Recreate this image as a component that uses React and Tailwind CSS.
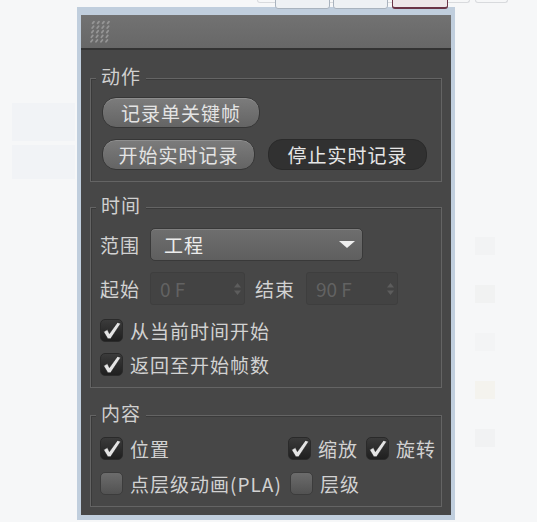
import React from "react";

const GroupBox = ({ title, className, children }) => (
  <div className={`relative mx-[9px] border border-[#646464] shadow-[inset_1px_1px_0_#3a3a3a] ${className}`}>
    <span className="absolute left-[5px] -top-[13px] bg-[#474747] px-[5px] text-[19px] leading-none tracking-[1px] text-[#d0d0d0]">
      {title}
    </span>
    {children}
  </div>
);

const Check = ({ on }) =>
  on ? (
    <span className="flex h-[23px] w-[23px] shrink-0 items-center justify-center rounded-[5px] border border-[#2a2a2a] bg-gradient-to-b from-[#3b3b3b] to-[#1f1f1f]">
      <svg width="21" height="21" viewBox="0 0 21 21">
        <path d="M2.6 11.8 L6.4 9.6 L8.4 13.6 L16.4 2.4 L19.8 3.4 L9.6 18.8 L6.8 18.8 Z" fill="#e4e4e4" stroke="#1a1a1a" strokeWidth="0.6" />
      </svg>
    </span>
  ) : (
    <span className="h-[23px] w-[23px] shrink-0 rounded-[5px] border border-[#3c3c3c] bg-gradient-to-b from-[#6c6c6c] to-[#525252]" />
  );

const CheckRow = ({ on, label, className = "" }) => (
  <div className={`flex items-center gap-[7px] ${className}`}>
    <Check on={on} />
    <span className="text-[19px] leading-none tracking-[1px] text-[#d2d2d2]">{label}</span>
  </div>
);

const PillButton = ({ label, pressed, width }) => (
  <div
    className={`flex h-[31px] items-center justify-center rounded-[14px] border text-[19px] leading-none tracking-[1px] ${width} ${
      pressed
        ? "border-[#2a2a2a] bg-[#313131] text-[#e6e6e6]"
        : "border-[#363636] bg-gradient-to-b from-[#7c7c7c] to-[#646464] text-[#e4e4e4] shadow-[inset_0_1px_0_#8e8e8e]"
    }`}
  >
    {label}
  </div>
);

const Spinner = () => (
  <svg width="9" height="14" viewBox="0 0 9 14">
    <path d="M4.5 1 L8 5.5 L1 5.5 Z" fill="#5d5d5d" />
    <path d="M4.5 13 L8 8.5 L1 8.5 Z" fill="#5d5d5d" />
  </svg>
);

const FrameField = ({ value, width }) => (
  <div className={`flex h-[33px] items-center justify-between rounded-[3px] border border-[#3e3e3e] bg-[#434343] pl-[9px] pr-[2px] ${width}`}>
    <span className="text-[19px] leading-none text-[#626262]">{value}</span>
    <Spinner />
  </div>
);

const Grip = () => (
  <svg width="22" height="24" viewBox="0 0 22 24">
    {[0, 1, 2, 3, 4].map((r) =>
      [0, 1, 2, 3].map((c) => (
        <path
          key={`${r}-${c}`}
          d={`M${c * 5 + 2.4 + (4 - r) * 0.4} ${r * 4.6 + 1.6} l-1.4 1.8`}
          stroke="#959595"
          strokeWidth="1.8"
          strokeLinecap="round"
        />
      ))
    )}
  </svg>
);

export default function App() {
  return (
    <div className="flex h-[522px] w-[537px] flex-col overflow-hidden bg-[#f6f7f8] font-['Noto_Sans_CJK_SC','Noto_Sans',sans-serif]">
      {/* page behind the window */}
      <div className="flex h-[7px] shrink-0 items-start">
        <div className="ml-[257px] h-[3px] w-[213px] rounded-b-md border-x border-b border-[#d8dadd]" />
        <div className="ml-[5px] h-[3px] w-[33px] rounded-b-md border-x border-b border-[#d8dadd]" />
      </div>

      <div className="flex">
        <div className="w-[77px] shrink-0 pt-[96px] pl-[12px]">
          <div className="h-[38px] w-[63px] bg-[#f1f3f6]" />
          <div className="mt-[4px] h-[34px] w-[63px] bg-[#f1f3f6]" />
        </div>

        {/* window */}
        <div className="relative h-[513px] w-[378px] shrink-0 border-x-4 border-t-[8px] border-b-[5px] border-[#c0cedd] bg-[#474747]">
          <div className="absolute -top-[16px] left-[194px] flex gap-[3px]">
            <div className="h-[10px] w-[55px] rounded-b-[3px] border border-[#a9b3be] bg-[#eef1f4]" />
            <div className="h-[10px] w-[55px] rounded-b-[3px] border border-[#a9b3be] bg-[#eef1f4]" />
            <div className="ml-[1px] h-[10px] w-[56px] rounded-b-[3px] border-x border-b-2 border-[#6a3346] bg-[#eee6e9]" />
          </div>

          <div className="flex h-[35px] items-center border-b-2 border-[#333333] bg-gradient-to-b from-[#727272] to-[#676767] pl-[9px]">
            <Grip />
          </div>

          <GroupBox title="动作" className="mt-[28px] h-[104px] pl-[11px] pt-[18px]">
            <PillButton label="记录单关键帧" width="w-[158px]" />
            <div className="mt-[11px] flex gap-[13px]">
              <PillButton label="开始实时记录" width="w-[153px]" />
              <PillButton label="停止实时记录" pressed width="w-[159px]" />
            </div>
          </GroupBox>

          <GroupBox title="时间" className="mt-[25px] h-[181px] pl-[9px] pt-[20px]">
            <div className="flex items-center gap-[10px]">
              <span className="text-[19px] leading-none tracking-[1px] text-[#d2d2d2]">范围</span>
              <div className="flex h-[33px] w-[213px] items-center justify-between rounded-[5px] border border-[#393939] bg-gradient-to-b from-[#6e6e6e] to-[#5f5f5f] pl-[13px] pr-[7px] shadow-[inset_0_1px_0_#7e7e7e]">
                <span className="text-[19px] leading-none tracking-[1px] text-[#ececec]">工程</span>
                <svg width="16" height="7" viewBox="0 0 16 7">
                  <path d="M0 0 H16 L8 7 Z" fill="#eeeeee" />
                </svg>
              </div>
            </div>
            <div className="mt-[11px] flex items-center">
              <span className="w-[50px] text-[19px] leading-none tracking-[1px] text-[#d2d2d2]">起始</span>
              <FrameField value="0 F" width="w-[95px]" />
              <span className="ml-[10px] w-[51px] text-[19px] leading-none tracking-[1px] text-[#d2d2d2]">结束</span>
              <FrameField value="90 F" width="w-[92px]" />
            </div>
            <CheckRow on label="从当前时间开始" className="mt-[14px]" />
            <CheckRow on label="返回至开始帧数" className="mt-[11px]" />
          </GroupBox>

          <GroupBox title="内容" className="mt-[27px] h-[92px] pl-[9px] pt-[21px]">
            <div className="flex items-center">
              <CheckRow on label="位置" className="w-[188px]" />
              <CheckRow on label="缩放" />
              <CheckRow on label="旋转" className="ml-[8px]" />
            </div>
            <div className="mt-[12px] flex items-center">
              <CheckRow label="点层级动画(PLA)" className="w-[190px]" />
              <CheckRow label="层级" />
            </div>
          </GroupBox>
        </div>

        <div className="flex flex-col gap-[30px] pl-[20px] pt-[230px]">
          <div className="h-[18px] w-[20px] bg-[#f2f3f4]" />
          <div className="h-[18px] w-[20px] bg-[#f1f2f2]" />
          <div className="h-[18px] w-[20px] bg-[#f3f4f5]" />
          <div className="h-[18px] w-[20px] bg-[#f4f3ee]" />
          <div className="h-[18px] w-[20px] bg-[#f1f2f3]" />
        </div>
      </div>
    </div>
  );
}
